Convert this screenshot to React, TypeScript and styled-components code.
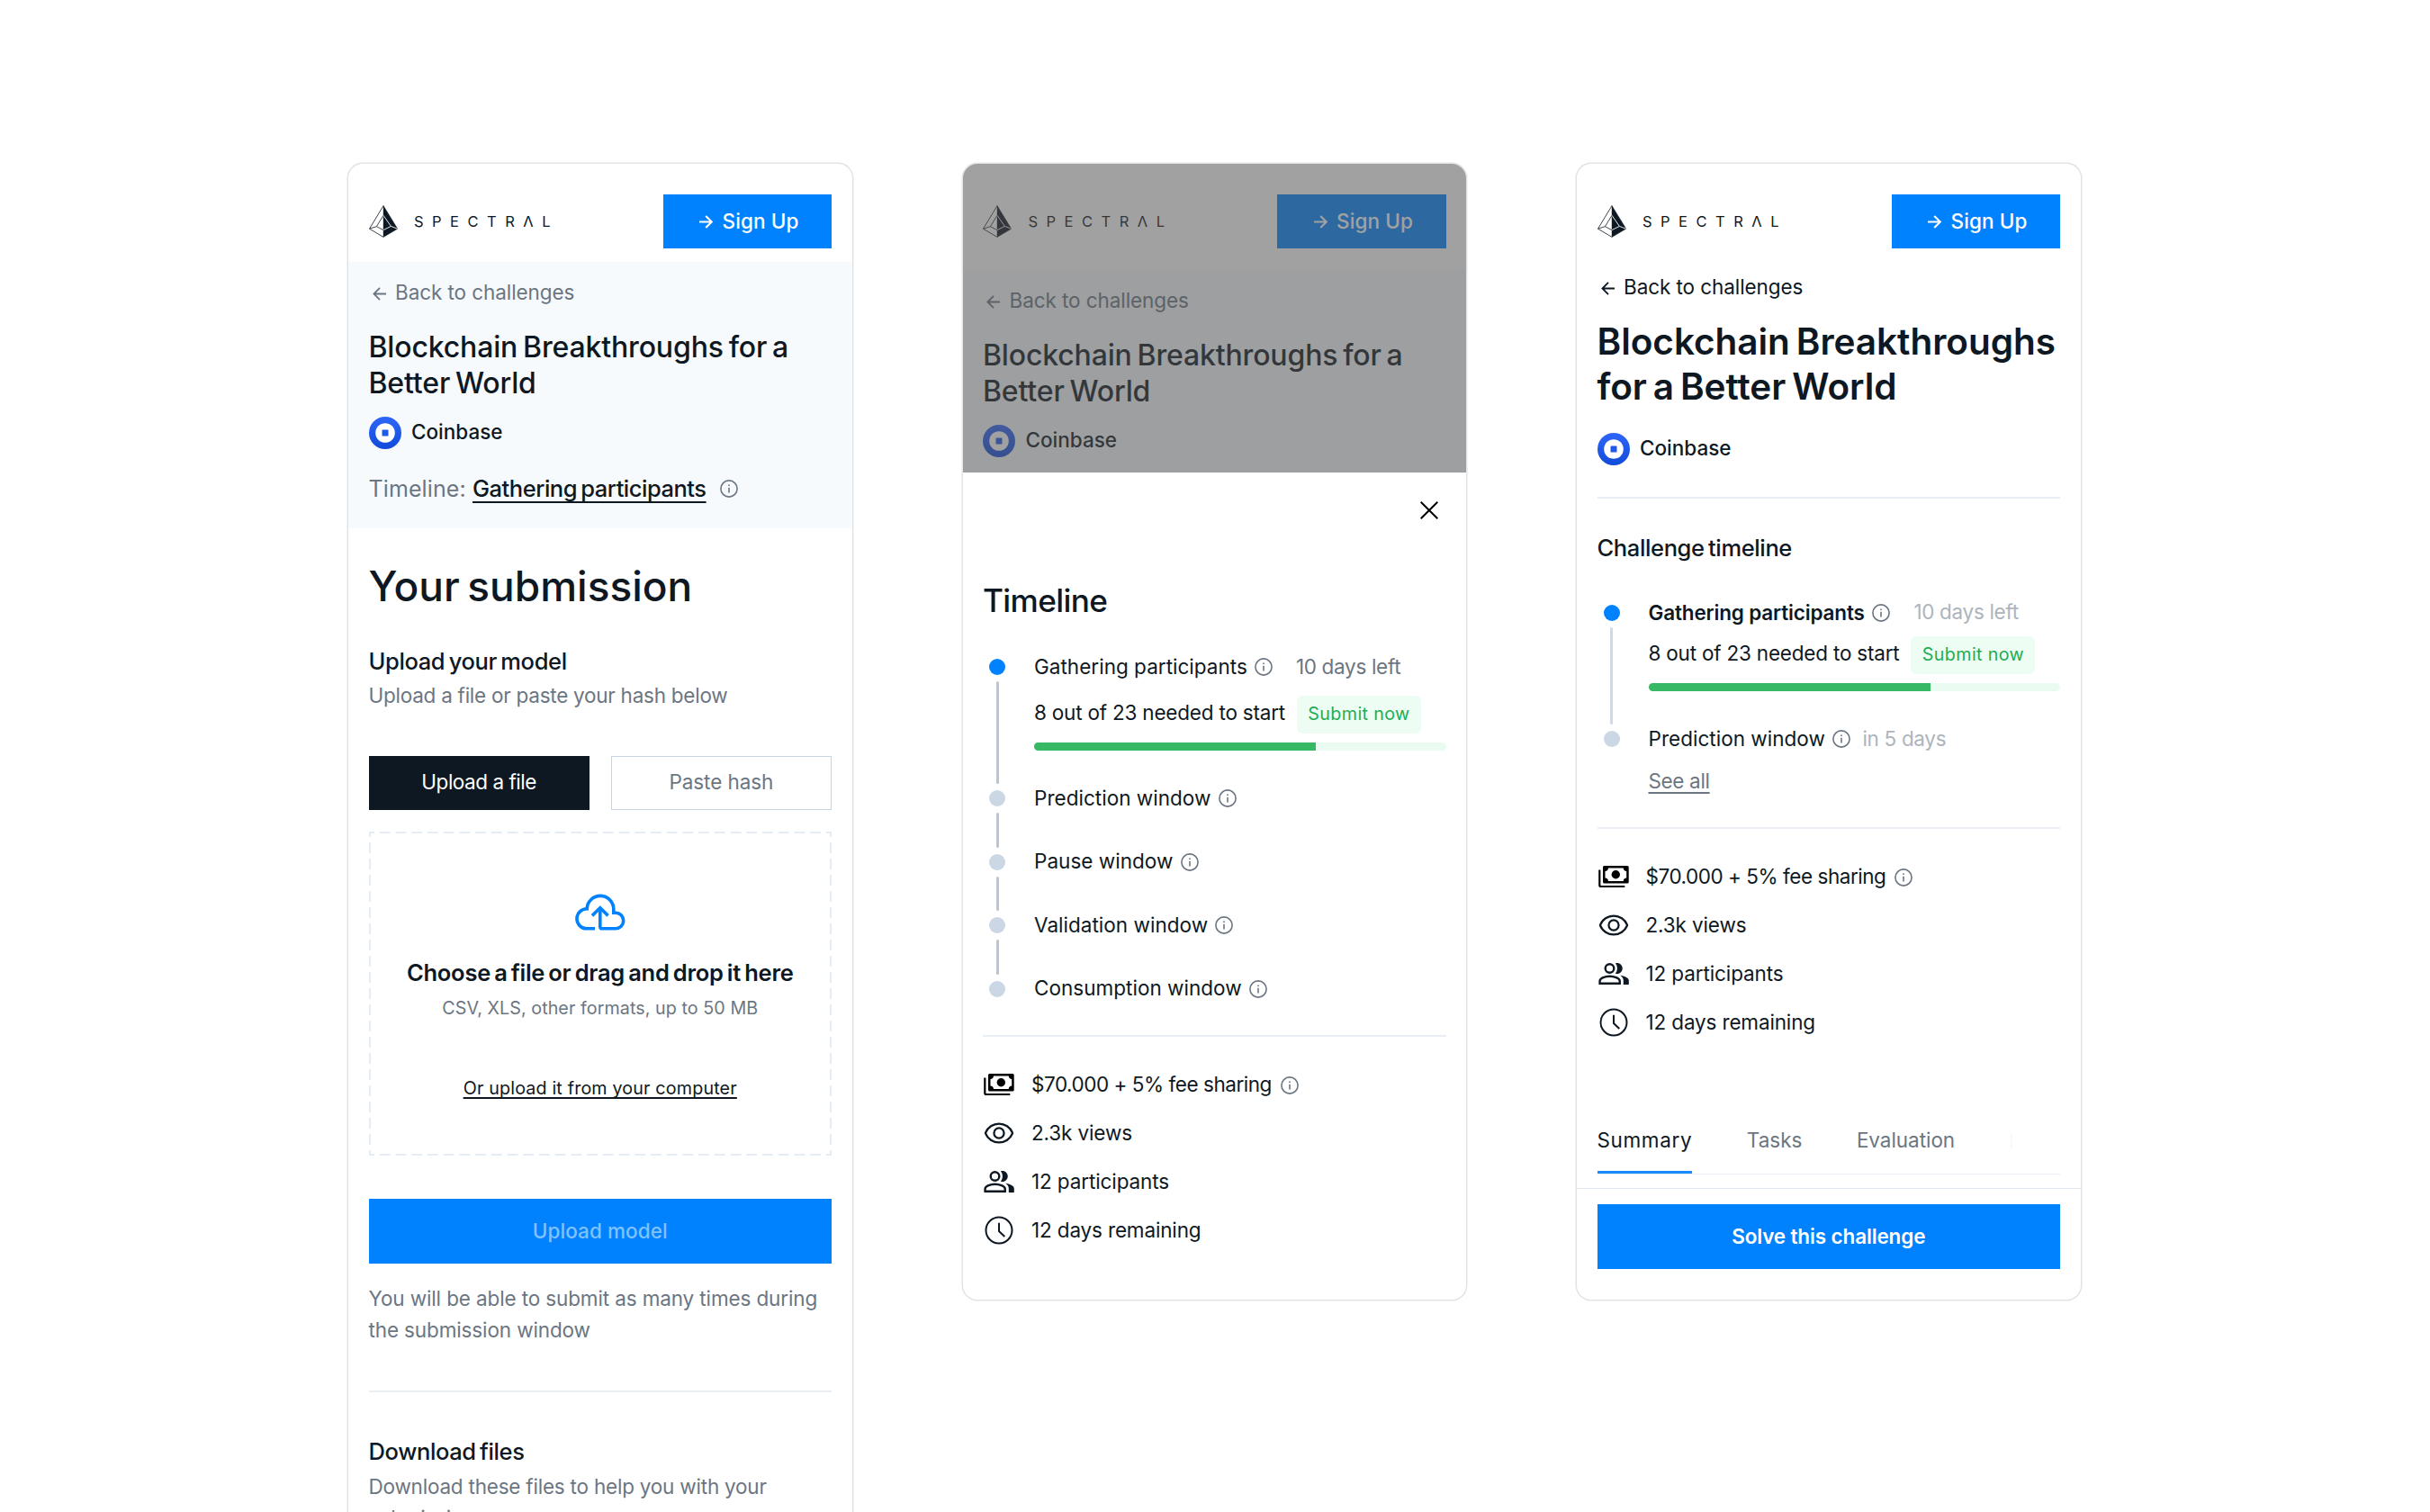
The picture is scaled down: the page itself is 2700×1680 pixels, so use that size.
import React from 'react';
import styled, { createGlobalStyle, css } from 'styled-components';

const ink = '#0e1822';
const muted = '#6b7682';
const faint = '#adb4bd';
const blue = '#0082ff';
const rule = '#e8eef4';

const GlobalStyle = createGlobalStyle`
  *, *::before, *::after { box-sizing: border-box; }
  html, body { margin: 0; padding: 0; background: #fff; }
  body {
    font-family: Inter, "Liberation Sans", sans-serif;
    color: ${ink};
    height: 1680px;
    overflow: hidden;
  }
  h1, h2, h3, p { margin: 0; font-weight: 400; }
  svg { display: block; flex: none; }
`;

/* ---------- layout ---------- */

const Board = styled.main`
  display: flex;
  align-items: flex-start;
  gap: 123px;
  width: 2700px;
  height: 1680px;
  padding: 181.5px 0 0 387px;
  overflow: hidden;
  background: #fff;
`;

const Phone = styled.section<{ $height: number }>`
  display: flex;
  flex-direction: column;
  flex: none;
  width: 559.5px;
  height: ${(p) => p.$height}px;
  border-radius: 16px;
  overflow: hidden;
  background: #fff;
  box-shadow: 0 0 0 1.5px #e0e4e8;
`;

const Header = styled.header<{ $bottom: number }>`
  display: flex;
  align-items: center;
  justify-content: space-between;
  flex: none;
  padding: 34.5px 22.5px ${(p) => p.$bottom}px;
`;

const Body = styled.div`
  display: flex;
  flex-direction: column;
  flex: none;
  padding: 0 22.5px;
`;

const Hero = styled(Body)`
  height: 295.5px;
  padding-top: 19px;
  background: #f6fafd;
`;

const Divider = styled.hr<{ $top: number }>`
  flex: none;
  width: 100%;
  height: 2px;
  margin: ${(p) => p.$top}px 0 0;
  border: 0;
  background: ${rule};
`;

/* ---------- brand ---------- */

const Brand = styled.div`
  display: flex;
  align-items: center;
  gap: 18.5px;
`;

const Wordmark = styled.span`
  font-size: 16.5px;
  line-height: 24px;
  letter-spacing: 9.5px;
`;

const SignUp = styled.button`
  display: flex;
  align-items: center;
  gap: 9.5px;
  width: 187.5px;
  height: 60px;
  padding: 0 0 0 40.5px;
  border: 0;
  background: ${blue};
  color: #fff;
  font: 500 22.5px/60px Inter, sans-serif;
  letter-spacing: 0.005em;
`;

/* ---------- text ---------- */

const BackLink = styled.a<{ $color: string; $top?: number }>`
  display: flex;
  align-items: center;
  gap: 10.5px;
  height: 30px;
  margin-top: ${(p) => p.$top ?? 0}px;
  padding-left: 4px;
  color: ${(p) => p.$color};
  font-size: 22.5px;
  line-height: 30px;
  letter-spacing: -0.0033em;
  svg { margin-top: 3px; }
`;

const HeroTitle = styled.h2`
  margin-top: 26px;
  font-size: 32px;
  font-weight: 500;
  line-height: 39.5px;
  letter-spacing: -0.0048em;
  word-spacing: -0.08em;
`;

const BigTitle = styled.h2`
  margin-top: 21px;
  font-size: 40.5px;
  font-weight: 600;
  line-height: 50.5px;
  letter-spacing: -0.001em;
  word-spacing: -0.08em;
  white-space: nowrap;
`;

const Sponsor = styled.div<{ $top: number }>`
  display: flex;
  align-items: center;
  gap: 11.5px;
  height: 36px;
  margin-top: ${(p) => p.$top}px;
  font-size: 22.5px;
  font-weight: 500;
  line-height: 34px;
  span { padding-bottom: 2px; }
`;

const Phase = styled.p`
  display: flex;
  align-items: center;
  height: 36px;
  margin-top: 25.6px;
  color: ${muted};
  font-size: 25px;
  line-height: 36px;
  letter-spacing: 0.0044em;
`;

const PhaseName = styled.a`
  margin: 0 15px 0 7.2px;
  color: ${ink};
  font-size: 25.5px;
  font-weight: 500;
  letter-spacing: -0.0188em;
  word-spacing: -0.08em;
  text-decoration: underline 1.5px;
  text-decoration-skip-ink: none;
  text-underline-offset: 5px;
`;

const PageTitle = styled.h1`
  margin-top: 34.5px;
  font-size: 46px;
  font-weight: 500;
  line-height: 60px;
  word-spacing: -0.08em;
`;

const SheetTitle = styled.h1`
  margin-top: 65.5px;
  font-size: 35.2px;
  font-weight: 450;
  line-height: 48px;
  letter-spacing: -0.018em;
`;

const SectionTitle = styled.h3<{ $top: number }>`
  margin-top: ${(p) => p.$top}px;
  font-size: 25.5px;
  font-weight: 500;
  line-height: 36px;
  letter-spacing: -0.0145em;
  word-spacing: -0.08em;
`;

const Note = styled.p<{ $top: number; $ls: number }>`
  margin-top: ${(p) => p.$top}px;
  color: ${muted};
  font-size: 22.5px;
  line-height: 34.5px;
  letter-spacing: ${(p) => p.$ls}em;
  white-space: nowrap;
`;

/* ---------- buttons ---------- */

const Segments = styled.div`
  display: grid;
  grid-template-columns: 1fr 1fr;
  gap: 24px;
  margin-top: 49px;
`;

const Segment = styled.button<{ $active?: boolean }>`
  height: 60px;
  padding: 0 0 2px;
  font: 400 22.5px/30px Inter, sans-serif;
  ${(p) =>
    p.$active
      ? css`
          border: 0;
          background: ${ink};
          color: #fff;
          letter-spacing: -0.0208em;
        `
      : css`
          border: 1px solid #c6d5e4;
          background: #fff;
          color: ${muted};
          letter-spacing: -0.0034em;
        `}
`;

const Primary = styled.button<{ $top: number; $disabled?: boolean }>`
  flex: none;
  width: 100%;
  height: 72px;
  margin-top: ${(p) => p.$top}px;
  padding: 0;
  border: 0;
  background: ${blue};
  color: ${(p) => (p.$disabled ? '#80c1ff' : '#fff')};
  font: ${(p) => (p.$disabled ? 500 : 600)} 22.5px/72px Inter, sans-serif;
  letter-spacing: ${(p) => (p.$disabled ? 0.0035 : -0.006)}em;
`;

/* ---------- drop zone ---------- */

const dashX = 'repeating-linear-gradient(90deg, #e4ecf5 0 6px, transparent 6px 12px, #e4ecf5 12px 18px)';
const dashY = 'repeating-linear-gradient(180deg, #e4ecf5 0 6px, transparent 6px 12px, #e4ecf5 12px 18px)';

const DropZone = styled.div`
  display: flex;
  flex-direction: column;
  align-items: center;
  height: 360px;
  margin-top: 24px;
  padding-top: 68px;
  background-image: ${dashX}, ${dashX}, ${dashY}, ${dashY};
  background-size: 18px 2px, 18px 2px, 2px 18px, 2px 18px;
  background-position: left top, left bottom, left top, right top;
  background-repeat: round no-repeat, round no-repeat, no-repeat round, no-repeat round;
`;

const DropTitle = styled.h3`
  margin-top: 26px;
  font-size: 25.5px;
  font-weight: 600;
  line-height: 36px;
  letter-spacing: -0.0095em;
  word-spacing: -0.08em;
`;

const DropHint = styled.p`
  margin-top: 6px;
  color: ${muted};
  font-size: 19.7px;
  line-height: 30px;
  letter-spacing: 0.0036em;
`;

const DropLink = styled.a`
  margin-top: 59px;
  font-size: 19.7px;
  line-height: 30px;
  letter-spacing: 0.0084em;
  text-decoration: underline 1.5px;
  text-decoration-skip-ink: none;
  text-underline-offset: 2.5px;
`;

/* ---------- bottom sheet ---------- */

const Dimmed = styled.div`
  position: relative;
  flex: none;
  height: 343.5px;
  overflow: hidden;
`;

const Scrim = styled.div`
  position: absolute;
  inset: 0;
  background: rgba(83, 83, 83, 0.545);
`;

const SheetTop = styled.div`
  display: flex;
  justify-content: flex-end;
  padding: 32px 8.5px 0;
`;

/* ---------- timeline ---------- */

const Steps = styled.ol<{ $top: number }>`
  display: flex;
  flex-direction: column;
  margin: ${(p) => p.$top}px 0 0;
  padding: 0 0 0 7px;
  list-style: none;
`;

const Step = styled.li<{ $height: number }>`
  display: grid;
  grid-template-columns: 18px 1fr;
  column-gap: 32px;
  height: ${(p) => p.$height}px;
`;

const Rail = styled.div`
  display: flex;
  flex-direction: column;
  align-items: center;
  gap: 7px;
  padding-bottom: 7px;
`;

const Dot = styled.i<{ $active?: boolean }>`
  flex: none;
  width: 18px;
  height: 18px;
  border-radius: 50%;
  background: ${(p) => (p.$active ? blue : '#cbd7e4')};
`;

const Line = styled.i<{ $color: string }>`
  flex: 1;
  width: 3px;
  border-radius: 1.5px;
  background: ${(p) => p.$color};
`;

const StepBody = styled.div`
  min-width: 0;
  margin-top: -7px;
`;

const StepHead = styled.div<{ $gap: number }>`
  display: flex;
  align-items: center;
  height: 30px;
  font-size: 22.5px;
  line-height: 30px;
  white-space: nowrap;
  svg { margin: 2px ${(p) => p.$gap}px 0 8.2px; }
`;

const StepName = styled.span<{ $bold?: boolean }>`
  padding-top: ${(p) => (p.$bold ? 3 : 1)}px;
  font-weight: ${(p) => (p.$bold ? 600 : 400)};
  letter-spacing: ${(p) => (p.$bold ? -0.0073 : 0.001)}em;
`;

const When = styled.span<{ $color: string }>`
  padding-top: 1px;
  color: ${(p) => p.$color};
  letter-spacing: -0.014em;
`;

const Quota = styled.div<{ $top: number }>`
  display: flex;
  align-items: center;
  gap: 13px;
  height: 42px;
  margin-top: ${(p) => p.$top}px;
  font-size: 22.5px;
  line-height: 30px;
  letter-spacing: -0.0091em;
  white-space: nowrap;
  > span { padding-bottom: 3px; }
`;

const Chip = styled.a`
  width: 138px;
  height: 42px;
  border-radius: 6px;
  background: #edfdf4;
  color: #21ad53;
  font-size: 19.7px;
  line-height: 40px;
  letter-spacing: 0.0186em;
  text-align: center;
`;

const Track = styled.div`
  display: flex;
  height: 9px;
  margin-top: 10.5px;
  border-radius: 4.5px;
  overflow: hidden;
  background: #eafcf2;
`;

const Fill = styled.i`
  width: 68.5%;
  background: #36b864;
`;

const SeeAll = styled.a`
  display: inline-block;
  margin-top: 17.5px;
  color: ${muted};
  font-size: 22.5px;
  line-height: 30px;
  letter-spacing: -0.0154em;
  text-decoration: underline 1.5px;
  text-underline-offset: 4px;
`;

/* ---------- stats ---------- */

const Stats = styled.ul<{ $top: number }>`
  display: flex;
  flex-direction: column;
  margin: ${(p) => p.$top}px 0 0;
  padding: 0;
  list-style: none;
`;

const Stat = styled.li<{ $ls: number }>`
  display: flex;
  align-items: center;
  height: 54px;
  font-size: 22.5px;
  line-height: 30px;
  letter-spacing: ${(p) => p.$ls}em;
  > svg:first-child { margin: 2px 18px 0 0; }
  > span { padding-top: 1.5px; }
  > span + svg { margin: 3px 0 0 10px; }
`;

/* ---------- tabs ---------- */

const Tabs = styled.nav`
  display: flex;
  gap: 60.5px;
  height: 53px;
  margin-top: 89.4px;
  border-bottom: 1px solid ${rule};
`;

const Tab = styled.a<{ $active?: boolean; $ls: number }>`
  height: 52.5px;
  color: ${(p) => (p.$active ? ink : muted)};
  border-bottom: 3px solid ${(p) => (p.$active ? '#168cff' : 'transparent')};
  font-size: 22.5px;
  line-height: 30px;
  letter-spacing: ${(p) => p.$ls}em;
`;

const TabPeek = styled.i`
  width: 2px;
  height: 17px;
  margin: 7px 0 0 1px;
  background: #f8f9fa;
`;

const Footer = styled.footer`
  margin-top: 15.5px;
  padding: 0 22.5px;
  border-top: 1px solid #e0e7ee;
`;

/* ---------- drawings ---------- */

const Pyramid = () => (
  <svg width="32" height="36" viewBox="0 0 32 36" fill="none" strokeLinejoin="round">
    <path d="M16 .4V35.6L31.8 26.2Z" fill={ink} stroke={ink} strokeWidth=".4" />
    <path d="M16 .6L.5 26.2L16 35.4" stroke={ink} strokeWidth=".8" />
    <path d="M16 11.3L8.4 23.7L16 27.6M8.4 23.7L.5 26.2" stroke={ink} strokeWidth=".8" />
    <path d="M16 11.3L24.4 23.4L16 27.6M24.4 23.4L31.6 26.2" stroke="#fff" strokeWidth=".9" />
  </svg>
);

const ArrowRight = () => (
  <svg width="16" height="15" viewBox="0 0 16 15" fill="none" stroke="currentColor" strokeWidth="2.1">
    <path d="M0 7.5H14M7.2 .9L13.8 7.5L7.2 14.1" />
  </svg>
);

const ArrowLeft = () => (
  <svg width="15" height="15" viewBox="0 0 15 15" fill="none" stroke="currentColor" strokeWidth="1.8">
    <path d="M15 7.5H1.4M8 .9L1.4 7.5L8 14.1" />
  </svg>
);

const Info = () => (
  <svg width="20" height="20" viewBox="0 0 20 20" fill="none" stroke={muted}>
    <circle cx="10" cy="10" r="9.1" strokeWidth="1.6" />
    <path d="M10 8.7V14.4" strokeWidth="1.6" />
    <path d="M10 5.4V7.1" strokeWidth="1.7" />
  </svg>
);

const CoinbaseMark = () => (
  <svg width="36" height="36" viewBox="0 0 36 36">
    <defs>
      <linearGradient id="coin" x1="0" y1="0" x2="0" y2="1">
        <stop offset="0" stopColor="#2e66f8" />
        <stop offset="1" stopColor="#124ada" />
      </linearGradient>
    </defs>
    <circle cx="18" cy="18" r="18" fill="url(#coin)" />
    <circle cx="18" cy="18" r="10.8" fill="#fff" />
    <rect x="14.5" y="14.5" width="7" height="7" rx=".6" fill="#2059ea" />
  </svg>
);

const Cloud = () => (
  <svg width="60" height="45" viewBox="0 0 60 45" fill="none" stroke={blue} strokeWidth="3.6">
    <path d="M24 39.8H14.7a11 11 0 0 1 .5-22A14.8 14.8 0 0 1 44.8 18.5V22.2H46.9a8.8 8.8 0 0 1 0 17.6H32.2q-2.4 0-2.4-2.4V17" />
    <path d="M21 25.4L29.8 16.8L38.6 25.4" />
  </svg>
);

const Close = () => (
  <svg width="20" height="20" viewBox="0 0 20 20" stroke="#000" strokeWidth="2">
    <path d="M.7 .7L19.3 19.3M19.3 .7L.7 19.3" />
  </svg>
);

const Money = () => (
  <svg width="36" height="36" viewBox="0 0 36 36">
    <path
      fill="#000"
      fillRule="evenodd"
      d="M7.5 6H33.2q1.5 0 1.5 1.5V24q0 1.5-1.5 1.5H7.5Q6 25.5 6 24V7.5Q6 6 7.5 6ZM12 8.5A4 4 0 0 1 8.5 12V19.5A4 4 0 0 1 12 23H28.7A4 4 0 0 1 32.2 19.5V12A4 4 0 0 1 28.7 8.5Z"
    />
    <circle cx="20.3" cy="15.8" r="4.7" fill="#000" />
    <path d="M2.3 10.5V27.5Q2.3 29 3.8 29H30.3" fill="none" stroke="#000" strokeWidth="2.2" />
  </svg>
);

const Eye = () => (
  <svg width="36" height="36" viewBox="0 0 24 24" fill="none" stroke={ink} strokeWidth="1.5">
    <path d="M2.062 12.348a1 1 0 0 1 0-.696 10.75 10.75 0 0 1 19.876 0 1 1 0 0 1 0 .696 10.75 10.75 0 0 1-19.876 0" />
    <circle cx="12" cy="12" r="3.7" />
  </svg>
);

const People = () => (
  <svg width="36" height="36" viewBox="0 0 24 24" fill={ink}>
    <path d="M16.9 13.13C18.27 14.06 19.2 15.32 19.2 17v3H23.2v-3c0-2.18-3.54-3.47-6.3-3.87z" />
    <path d="M14.5 12c2.21 0 4-1.79 4-4s-1.79-4-4-4c-.47 0-.8.1-1.2.24a5.98 5.98 0 0 1 0 7.52c.4.14.73.24 1.2.24z" />
    <g fill="none" stroke={ink} strokeWidth="1.6">
      <circle cx="9" cy="8" r="3.2" />
      <path d="M1.7 19.2V17.3c0-2.1 4.3-3.5 7.3-3.5s7.5 1.4 7.5 3.5v1.9z" />
    </g>
  </svg>
);

const Clock = () => (
  <svg width="36" height="36" viewBox="0 0 36 36" fill="none" stroke={ink} strokeWidth="2">
    <circle cx="18" cy="18" r="14.5" />
    <path d="M18 9.8V19L24.3 25" />
  </svg>
);

/* ---------- parts ---------- */

const TopBar = ({ bottom }: { bottom: number }) => (
  <Header $bottom={bottom}>
    <Brand>
      <Pyramid />
      <Wordmark>SPECTRΛL</Wordmark>
    </Brand>
    <SignUp>
      <ArrowRight />
      Sign Up
    </SignUp>
  </Header>
);

const Coinbase = ({ top }: { top: number }) => (
  <Sponsor $top={top}>
    <CoinbaseMark />
    <span>Coinbase</span>
  </Sponsor>
);

const ChallengeHero = ({ phase }: { phase?: boolean }) => (
  <Hero>
    <BackLink $color={muted}>
      <ArrowLeft />
      Back to challenges
    </BackLink>
    <HeroTitle>
      Blockchain Breakthroughs for a<br />
      Better World
    </HeroTitle>
    <Coinbase top={18.3} />
    {phase && (
      <Phase>
        Timeline:<PhaseName>Gathering participants</PhaseName>
        <Info />
      </Phase>
    )}
  </Hero>
);

type StepProps = {
  name: string;
  height: number;
  line?: string;
  active?: boolean;
  bold?: boolean;
  when?: string;
  whenColor?: string;
  whenGap?: number;
  children?: React.ReactNode;
};

const TimelineStep = ({ name, height, line, active, bold, when, whenColor = muted, whenGap = 0, children }: StepProps) => (
  <Step $height={height}>
    <Rail>
      <Dot $active={active} />
      {line && <Line $color={line} />}
    </Rail>
    <StepBody>
      <StepHead $gap={whenGap}>
        <StepName $bold={bold}>{name}</StepName>
        <Info />
        {when && <When $color={whenColor}>{when}</When>}
      </StepHead>
      {children}
    </StepBody>
  </Step>
);

const Progress = ({ top }: { top: number }) => (
  <>
    <Quota $top={top}>
      <span>8 out of 23 needed to start</span>
      <Chip>Submit now</Chip>
    </Quota>
    <Track>
      <Fill />
    </Track>
  </>
);

const ChallengeStats = ({ top }: { top: number }) => (
  <Stats $top={top}>
    <Stat $ls={-0.0205}>
      <Money />
      <span>$70.000 + 5% fee sharing</span>
      <Info />
    </Stat>
    <Stat $ls={-0.006}>
      <Eye />
      <span>2.3k views</span>
    </Stat>
    <Stat $ls={-0.005}>
      <People />
      <span>12 participants</span>
    </Stat>
    <Stat $ls={-0.0066}>
      <Clock />
      <span>12 days remaining</span>
    </Stat>
  </Stats>
);

/* ---------- screens ---------- */

const SubmissionScreen = () => (
  <Phone $height={1600}>
    <TopBar bottom={15} />
    <ChallengeHero phase />
    <Body>
      <PageTitle>Your submission</PageTitle>
      <SectionTitle $top={35.6}>Upload your model</SectionTitle>
      <Note $top={3.6} $ls={-0.0113}>
        Upload a file or paste your hash below
      </Note>
      <Segments>
        <Segment $active>Upload a file</Segment>
        <Segment>Paste hash</Segment>
      </Segments>
      <DropZone>
        <Cloud />
        <DropTitle>Choose a file or drag and drop it here</DropTitle>
        <DropHint>CSV, XLS, other formats, up to 50 MB</DropHint>
        <DropLink>Or upload it from your computer</DropLink>
      </DropZone>
      <Primary $top={48} $disabled>
        Upload model
      </Primary>
      <Note $top={22.7} $ls={-0.0055}>
        You will be able to submit as many times during
        <br />
        the submission window
      </Note>
      <Divider $top={49.3} />
      <SectionTitle $top={48.8}>Download files</SectionTitle>
      <Note $top={3.6} $ls={-0.0095}>
        Download these files to help you with your
        <br />
        submission
      </Note>
    </Body>
  </Phone>
);

const TimelineScreen = () => (
  <Phone $height={1262.5}>
    <Dimmed>
      <TopBar bottom={24} />
      <ChallengeHero />
      <Scrim />
    </Dimmed>
    <Body>
      <SheetTop>
        <Close />
      </SheetTop>
      <SheetTitle>Timeline</SheetTitle>
      <Steps $top={41.5}>
        <TimelineStep
          name="Gathering participants"
          height={146.3}
          line="#b9c5d3"
          active
          when="10 days left"
          whenGap={25.8}
        >
          <Progress top={17.7} />
        </TimelineStep>
        <TimelineStep name="Prediction window" height={70.5} line="#b9c5d3" />
        <TimelineStep name="Pause window" height={70.5} line="#b9c5d3" />
        <TimelineStep name="Validation window" height={70.5} line="#b9c5d3" />
        <TimelineStep name="Consumption window" height={18} />
      </Steps>
      <Divider $top={42.5} />
      <ChallengeStats top={25.2} />
    </Body>
  </Phone>
);

const SummaryScreen = () => (
  <Phone $height={1262.5}>
    <TopBar bottom={0} />
    <Body>
      <BackLink $color={ink} $top={27.8}>
        <ArrowLeft />
        Back to challenges
      </BackLink>
      <BigTitle>
        Blockchain Breakthroughs
        <br />
        for a Better World
      </BigTitle>
      <Coinbase top={25.5} />
      <Divider $top={34.7} />
      <SectionTitle $top={37.2}>Challenge timeline</SectionTitle>
      <Steps $top={44.8}>
        <TimelineStep
          name="Gathering participants"
          height={140.3}
          line="#cfdae6"
          active
          bold
          when="10 days left"
          whenColor={faint}
          whenGap={26.5}
        >
          <Progress top={11.7} />
        </TimelineStep>
        <TimelineStep name="Prediction window" height={70.5} when="in 5 days" whenColor={faint} whenGap={13.3}>
          <SeeAll>See all</SeeAll>
        </TimelineStep>
      </Steps>
      <Divider $top={36.2} />
      <ChallengeStats top={25.4} />
      <Tabs>
        <Tab $active $ls={0.0285}>
          Summary
        </Tab>
        <Tab $ls={0}>Tasks</Tab>
        <Tab $ls={-0.0019}>Evaluation</Tab>
        <TabPeek />
      </Tabs>
    </Body>
    <Footer>
      <Primary $top={16.5}>Solve this challenge</Primary>
    </Footer>
  </Phone>
);

export default function App() {
  return (
    <>
      <GlobalStyle />
      <Board>
        <SubmissionScreen />
        <TimelineScreen />
        <SummaryScreen />
      </Board>
    </>
  );
}
